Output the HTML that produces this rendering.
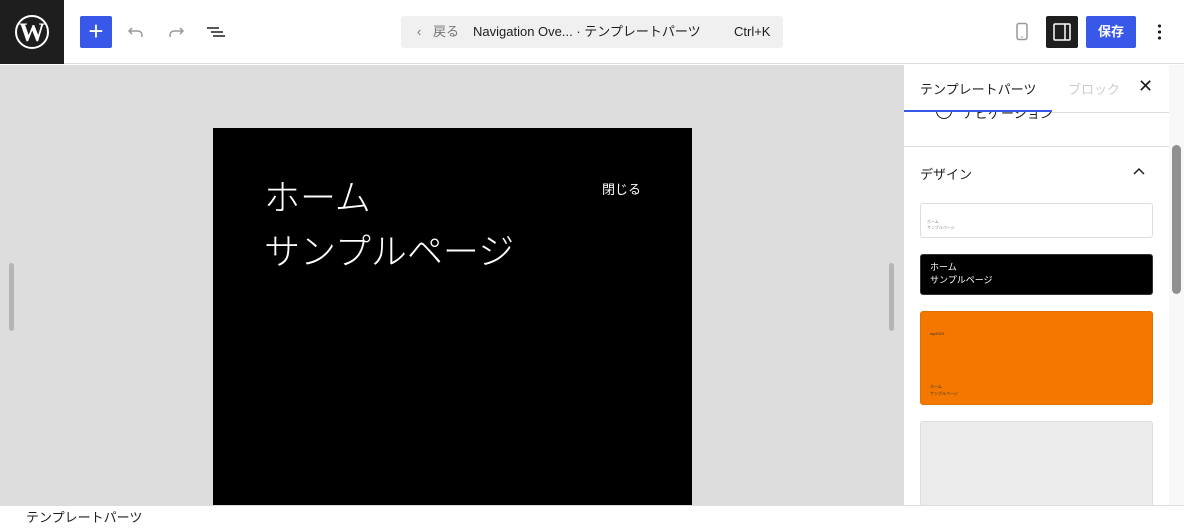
<!DOCTYPE html>
<html><head><meta charset="utf-8"><style>
*{box-sizing:border-box;margin:0;padding:0}
body{width:1184px;height:530px;overflow:hidden;background:#fff;font-family:"Liberation Sans","Noto Sans CJK JP",sans-serif;position:relative}
.abs{position:absolute}
</style></head><body>
<div class="abs" style="left:0;top:0;width:1184px;height:64px;background:#fff;border-bottom:1px solid #ddd"></div>
<div class="abs" style="left:0;top:0;width:64px;height:64px;background:#1e1e1e"></div>
<svg class="abs" style="left:14px;top:14px" width="36" height="36" viewBox="0 0 36 36"><circle cx="18" cy="18" r="16" fill="none" stroke="#fff" stroke-width="2"/><text x="18" y="27" text-anchor="middle" font-family="Liberation Serif" font-weight="bold" font-size="26" fill="#fff">W</text></svg>
<div class="abs" style="left:80px;top:16px;width:32px;height:32px;background:#3858e9;border-radius:2px;color:#fff;font-size:26px;line-height:30px;text-align:center">+</div>
<svg class="abs" style="left:124px;top:20px" width="24" height="24" viewBox="0 0 24 24"><path d="M8 8l-3 3 3 3M5 11h9a4 4 0 0 1 4 4v2" fill="none" stroke="#999" stroke-width="1.5"/></svg>
<svg class="abs" style="left:164px;top:20px" width="24" height="24" viewBox="0 0 24 24"><path d="M16 8l3 3-3 3M19 11h-9a4 4 0 0 0-4 4v2" fill="none" stroke="#999" stroke-width="1.5"/></svg>
<svg class="abs" style="left:204px;top:20px" width="24" height="24" viewBox="0 0 24 24"><path d="M3 8h12M7 12h12M9 16h12" fill="none" stroke="#1e1e1e" stroke-width="1.5"/></svg>
<div class="abs" style="left:401px;top:16px;width:382px;height:32px;background:#f0f0f0;border-radius:4px;font-size:13px;line-height:32px;color:#1e1e1e">
<span class="abs" style="left:16px;color:#757575">‹</span><span class="abs" style="left:32px;color:#757575">戻る</span><span class="abs" style="left:72px">Navigation Ove... · テンプレートパーツ</span><span class="abs" style="left:333px">Ctrl+K</span></div>
<svg class="abs" style="left:1014px;top:22px" width="16" height="20" viewBox="0 0 16 20"><rect x="3" y="1.5" width="10" height="16" rx="2" fill="none" stroke="#999" stroke-width="1.5"/><path d="M7 15h2" stroke="#999"/></svg>
<div class="abs" style="left:1046px;top:16px;width:32px;height:32px;background:#1e1e1e;border-radius:2px"></div>
<svg class="abs" style="left:1052px;top:22px" width="20" height="20" viewBox="0 0 20 20"><rect x="2" y="2" width="16" height="16" rx="1" fill="none" stroke="#fff" stroke-width="1.5"/><path d="M13 2v16" stroke="#fff" stroke-width="1.5"/></svg>
<div class="abs" style="left:1086px;top:16px;width:50px;height:32px;background:#3858e9;border-radius:2px;color:#fff;font-size:13px;line-height:32px;text-align:center;font-weight:bold">保存</div>
<div class="abs" style="left:1158px;top:23px;width:3px;height:18px;background:radial-gradient(circle,#1e1e1e 1.5px,transparent 1.6px) 0 0/3px 6px"></div>
<div class="abs" style="left:0;top:65px;width:903px;height:440px;background:#ddd"></div>
<div class="abs" style="left:9px;top:263px;width:5px;height:68px;background:#b5b5b5;border-radius:3px"></div>
<div class="abs" style="left:889px;top:263px;width:5px;height:68px;background:#b5b5b5;border-radius:3px"></div>
<div class="abs" style="left:213px;top:128px;width:479px;height:377px;background:#000;color:#fff">
<div class="abs" style="left:51px;top:45px;font-size:36px;font-weight:300;line-height:50px">ホーム</div>
<div class="abs" style="left:51px;top:99px;font-size:36px;font-weight:300;line-height:50px">サンプルページ</div>
<div class="abs" style="left:389px;top:51px;font-size:13px">閉じる</div></div>
<div class="abs" style="left:903px;top:65px;width:1px;height:440px;background:#ddd"></div>
<div class="abs" style="left:904px;top:65px;width:265px;height:440px;background:#fff;overflow:hidden">
<div class="abs" style="left:32px;top:38px;width:16px;height:16px;border:1.5px solid #1e1e1e;border-radius:50%"></div>
<div class="abs" style="left:58px;top:38px;font-size:13px;color:#1e1e1e">ナビゲーション</div>
<div class="abs" style="left:0;top:0;width:265px;height:46px;background:#fff"></div>
<div class="abs" style="left:16px;top:14px;font-size:13px;color:#1e1e1e">テンプレートパーツ</div>
<div class="abs" style="left:164px;top:14px;font-size:13px;color:#ccc">ブロック</div>
<div class="abs" style="left:234px;top:11px;font-size:18px;color:#1e1e1e">✕</div>
<div class="abs" style="left:0;top:45px;width:148px;height:2px;background:#3858e9"></div>
<div class="abs" style="left:148px;top:47px;width:117px;height:1px;background:#ddd"></div>
<div class="abs" style="left:0;top:81px;width:265px;height:1px;background:#ddd"></div>
<div class="abs" style="left:16px;top:99px;font-size:13px;color:#1e1e1e">デザイン</div>
<svg class="abs" style="left:228px;top:100px" width="14" height="14" viewBox="0 0 14 14"><path d="M2 9l5-5 5 5" fill="none" stroke="#1e1e1e" stroke-width="1.5"/></svg>
<div class="abs" style="left:16px;top:138px;width:233px;height:35px;border:1px solid #ddd;border-radius:3px;font-size:4px;color:#888;padding:15px 6px;line-height:6px">ホーム<br>サンプルページ</div>
<div class="abs" style="left:16px;top:189px;width:233px;height:41px;background:#000;border:1px solid #333;border-radius:3px;color:#fff;font-size:9px;line-height:13px;padding:6px 9px">ホーム<br>サンプルページ</div>
<div class="abs" style="left:16px;top:246px;width:233px;height:94px;background:#f47700;border:1px solid #e07000;border-radius:3px;font-size:4px;color:#333"><div class="abs" style="left:9px;top:19px">wp2024</div><div class="abs" style="left:9px;top:71px;line-height:7px">ホーム<br>サンプルページ</div></div>
<div class="abs" style="left:16px;top:356px;width:233px;height:100px;background:#ececec;border:1px solid #ddd;border-radius:3px"></div>
</div>
<div class="abs" style="left:1169px;top:65px;width:15px;height:440px;background:#f8f8f8"></div>
<div class="abs" style="left:1172px;top:145px;width:9px;height:149px;background:#909090;border-radius:5px"></div>
<div class="abs" style="left:0;top:505px;width:1184px;height:25px;background:#fff;border-top:1px solid #ddd;font-size:13px;line-height:24px;padding-left:26px;color:#1e1e1e">テンプレートパーツ</div>
</body></html>
